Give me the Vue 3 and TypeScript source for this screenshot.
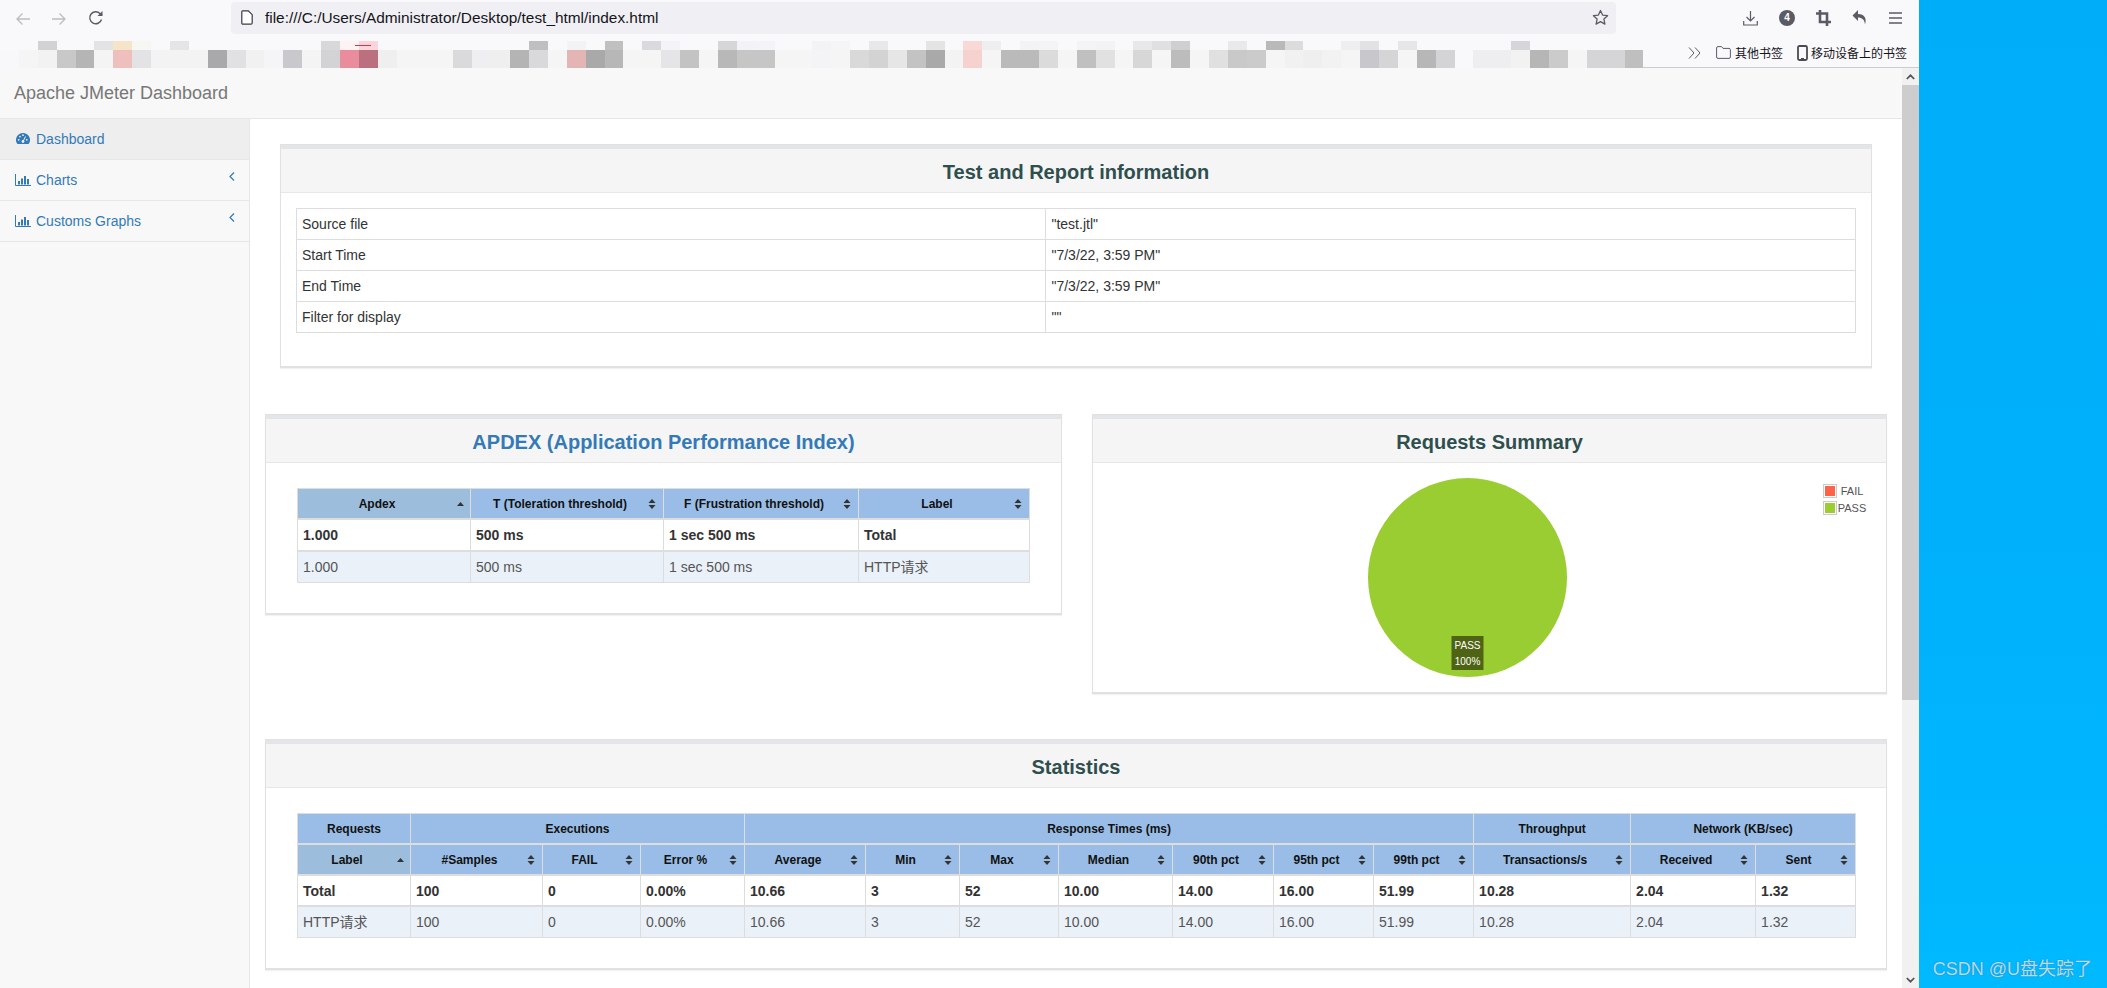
<script setup lang="ts">
const lower = ['f8f8fa','f5f5f6','f2f2f3','c8c8c8','b5b5b5','f4f4f4','eebfbd','e3e3e5','f3f3f4','f3f3f4','f3f3f4','a9a9ac','e1e1e3','f1f1f2','f5f5f7','c9c9cd','f4f4f5','d3d3d5','e98d9c','ba707e','efeff0','f5f5f5','f5f5f5','f5f5f5','dadadc','efeff1','efeff0','b4b4b4','d9d9db','f5f5f5','e4b5b5','a9a9a9','b7b7b7','f5f5f6','f5f5f6','e5e5e7','c3c3c3','f5f5f6','b8b8b8','c6c6c6','c6c6c6','f5f5f5','f5f5f5','f4f4f6','f5f5f5','d9d9da','d3d3d4','e6e6e7','c3c3c4','a9a9a9','f3f3f4','f5d2cf','f5f5f5','bababb','bababb','dbdbdc','f5f5f5','c0c0c1','e1e1e2','f5f5f5','d7d7d8','f5f5f5','bcbcbd','f5f5f5','e0e0e1','c9c9ca','cbcbcb','f5f5f5','f1f1f2','efeff0','f2f2f3','f5f5f6','c8c8cc','d5d5d7','f5f5f5','b7b7b7','d4d4d6','f9f9fb','eeeef0','eeeef0','f2f2f3','b6b6b6','cbcbcc','f5f5f5','d5d5d7','d5d5d7','bfbfbf']
const upperMap: Record<number, string> = { 2:'d2d2d4',5:'e3e3e5',6:'f6e4c8',7:'f6f6f3',9:'e5e5e7',17:'d8d8da',18:'fdf2f4',19:'fbd5dc',28:'bfbfc1',30:'f3f3f6',32:'c0c0c0',34:'dadade',35:'f3f3f8',38:'d6d6d8',39:'f3f3f7',40:'f4f4f8',43:'f3f3f6',44:'f5f5f8',46:'e8e8ea',49:'e4e4e5',51:'f8d9d5',52:'eeeef1',54:'f3f3f6',55:'f4f4f7',57:'f4f4f7',58:'f3f3f6',60:'e8e8ea',61:'e0e0e2',62:'cfcfd1',65:'e9e9eb',67:'b9b9ba',68:'dcdcde',71:'eeeef0',72:'e2e2e4',74:'e6e6e8',80:'d5d5da' }
const mosaic = [
  ...lower.map((_, i) => '#' + (upperMap[i] ?? 'f9f9fb')),
  ...lower.map((c) => '#' + c),
]

const infoCols = [749, 809]
const infoRows = [
  ['Source file', '"test.jtl"'],
  ['Start Time', '"7/3/22, 3:59 PM"'],
  ['End Time', '"7/3/22, 3:59 PM"'],
  ['Filter for display', '""'],
]

const apdexCols = [173, 193, 195, 171]
const apdexHead = ['Apdex', 'T (Toleration threshold)', 'F (Frustration threshold)', 'Label']
const apdexRows = [
  ['1.000', '500 ms', '1 sec 500 ms', 'Total'],
  ['1.000', '500 ms', '1 sec 500 ms', 'HTTP请求'],
]

const statCols = [113, 132, 98, 104, 121, 94, 99, 114, 101, 100, 100, 157, 125, 100]
const statGroups = [
  { t: 'Requests', s: 1 },
  { t: 'Executions', s: 3 },
  { t: 'Response Times (ms)', s: 7 },
  { t: 'Throughput', s: 1 },
  { t: 'Network (KB/sec)', s: 2 },
]
const statHead = ['Label', '#Samples', 'FAIL', 'Error %', 'Average', 'Min', 'Max', 'Median', '90th pct', '95th pct', '99th pct', 'Transactions/s', 'Received', 'Sent']
const statRows = [
  ['Total', '100', '0', '0.00%', '10.66', '3', '52', '10.00', '14.00', '16.00', '51.99', '10.28', '2.04', '1.32'],
  ['HTTP请求', '100', '0', '0.00%', '10.66', '3', '52', '10.00', '14.00', '16.00', '51.99', '10.28', '2.04', '1.32'],
]
</script>

<template>
  <div class="screen">
    <div class="window">
      <div class="toolbar">
        <svg class="tb-ico back" width="16" height="14" viewBox="0 0 16 14"><path d="M15 7H2M7.5 1.5 2 7l5.5 5.5" fill="none" stroke="#bdbdc1" stroke-width="1.3"/></svg>
        <svg class="tb-ico fwd" width="16" height="14" viewBox="0 0 16 14"><path d="M1 7h13M8.500 1.500 14 7l-5.500 5.500" fill="none" stroke="#bdbdc1" stroke-width="1.300"/></svg>
        <svg class="tb-ico reload" width="16" height="16" viewBox="0 0 16 16"><path d="M13.500 9.500A6 6 0 1 1 12 3.500L14 5.500" fill="none" stroke="#5b5b66" stroke-width="1.400"/><path d="M14.500 1v5h-5z" fill="#5b5b66"/></svg>
        <div class="urlbar">
          <svg width="12" height="15" viewBox="0 0 12 15"><path d="M1.500.8h5.800l3.900 3.900v8.300a1.200 1.200 0 0 1-1.200 1.200H1.500A1.200 1.200 0 0 1 .8 13V2A1.200 1.200 0 0 1 1.500.8z" fill="#fff" stroke="#3a3a44" stroke-width="1.200"/></svg>
          <span class="url">file:///C:/Users/Administrator/Desktop/test_html/index.html</span>
          <svg class="star" width="17" height="17" viewBox="0 0 17 17"><path d="M8.500 1.500l2.100 4.600 5 .6-3.700 3.400 1 5-4.400-2.500-4.400 2.500 1-5L1.400 6.700l5-.6z" fill="none" stroke="#5b5b66" stroke-width="1.300" stroke-linejoin="round"/></svg>
        </div>
        <div class="tb-right">
          <svg width="15" height="16" viewBox="0 0 15 16"><path d="M7.500 1v10M3.500 7l4 4 4-4M.7 11v4h13.600v-4" fill="none" stroke="#5b5b66" stroke-width="1.200"/></svg>
          <span class="badge">4</span>
          <svg width="15" height="16" viewBox="0 0 15 16"><path d="M4 0v12h11M0 3.500h11v12.500" fill="none" stroke="#5b5b66" stroke-width="2.600"/></svg>
          <svg width="15" height="16" viewBox="0 0 15 16"><path d="M6 0 .5 5.500 6 11V7.500c4 0 6.500 2 7 7 2-6-.5-10.500-7-10.500z" fill="#5b5b66"/></svg>
          <svg class="burger" width="13" height="12" viewBox="0 0 13 12"><path d="M0 1h13M0 6h13M0 11h13" stroke="#5b5b66" stroke-width="1.300"/></svg>
        </div>
      </div>

      <div class="bookmarks">
        <div class="mosaic">
          <i v-for="(c, i) in mosaic" :key="i" :style="{ background: c }"></i>
          <b class="redline"></b>
        </div>
        <svg class="more" width="13" height="12" viewBox="0 0 13 12"><path d="M1 .5 6 6l-5 5.500M7 .5 12 6l-5 5.500" fill="none" stroke="#5b5b66" stroke-width="1"/></svg>
        <svg class="folder" width="15" height="13" viewBox="0 0 15 13"><path d="M.6 2A1.400 1.400 0 0 1 2 .6h3.500l1.500 1.800h6a1.400 1.400 0 0 1 1.400 1.400V11A1.400 1.400 0 0 1 13 12.400H2A1.400 1.400 0 0 1 .6 11z" fill="none" stroke="#5b5b66" stroke-width="1"/></svg>
        <span class="bm-text">其他书签</span>
        <svg class="phone" width="11" height="16" viewBox="0 0 11 16"><rect x="1" y="1" width="9" height="14" rx="1.500" fill="none" stroke="#4a4a52" stroke-width="1.800"/><rect x="4" y="13" width="3" height="1.500" fill="#4a4a52"/></svg>
        <span class="bm-text">移动设备上的书签</span>
      </div>

      <div class="page">
        <div class="doc">
          <div class="navbar">Apache JMeter Dashboard</div>
          <div class="layout">
            <aside class="sidebar">
              <a class="nav-item active">
                <svg class="nav-ico" width="16" height="12" viewBox="0 0 14 12"><path d="M7 0a7 7 0 0 1 6 10.600.8.8 0 0 1-.7.4H1.700a.8.8 0 0 1-.7-.4A7 7 0 0 1 7 0z" fill="#337ab7"/><g fill="#eee"><circle cx="2.700" cy="6.800" r=".9"/><circle cx="4" cy="3.600" r=".9"/><circle cx="7" cy="2.200" r=".9"/><circle cx="10.800" cy="6.800" r=".9"/><circle cx="7" cy="8.500" r="1.400"/></g><path d="M7 8.500 9.500 3.500" stroke="#eee" stroke-width="1"/></svg>
                Dashboard
              </a>
              <a class="nav-item">
                <svg class="nav-ico" width="16" height="12" viewBox="0 0 16 12"><path d="M.5 0v11.500H16" fill="none" stroke="#337ab7"/><path d="M3 7h2v3.500H3zM6 4.500h2v6H6zM9 2h2v8.500H9zM12 5h2v5.500h-2z" fill="#337ab7"/></svg>
                Charts
                <svg class="angle" width="6" height="9" viewBox="0 0 6 9"><path d="M5 .5 1 4.500l4 4" fill="none" stroke="#337ab7" stroke-width="1.200"/></svg>
              </a>
              <a class="nav-item">
                <svg class="nav-ico" width="16" height="12" viewBox="0 0 16 12"><path d="M.5 0v11.500H16" fill="none" stroke="#337ab7"/><path d="M3 7h2v3.500H3zM6 4.500h2v6H6zM9 2h2v8.500H9zM12 5h2v5.500h-2z" fill="#337ab7"/></svg>
                Customs Graphs
                <svg class="angle" width="6" height="9" viewBox="0 0 6 9"><path d="M5 .5 1 4.500l4 4" fill="none" stroke="#337ab7" stroke-width="1.200"/></svg>
              </a>
            </aside>

            <main class="main">
              <section class="panel first">
                <h3 class="panel-head">Test and Report information</h3>
                <div class="panel-body info-body">
                  <table class="grid info">
                    <colgroup><col v-for="w in infoCols" :key="w" :style="{ width: w + 'px' }" /></colgroup>
                    <tbody>
                      <tr v-for="r in infoRows" :key="r[0]">
                        <td v-for="c in r" :key="c">{{ c }}</td>
                      </tr>
                    </tbody>
                  </table>
                </div>
              </section>

              <div class="row">
                <section class="panel">
                  <h3 class="panel-head link">APDEX (Application Performance Index)</h3>
                  <div class="panel-body">
                    <table class="grid data">
                      <colgroup><col v-for="(w, i) in apdexCols" :key="i" :style="{ width: w + 'px' }" /></colgroup>
                      <thead>
                        <tr class="sortrow">
                          <th v-for="(h, i) in apdexHead" :key="h" :class="{ sorted: i === 0 }">
                            {{ h }}
                            <svg v-if="i === 0" class="sort asc" width="7" height="4" viewBox="0 0 7 4"><path d="M3.500 0 7 4H0z" fill="#333"/></svg>
                            <svg v-else class="sort" width="8" height="10" viewBox="0 0 8 10"><path d="M4 0l3.500 4h-7zM4 10l3.500-4h-7z" fill="#333"/></svg>
                          </th>
                        </tr>
                      </thead>
                      <tbody>
                        <tr v-for="(r, ri) in apdexRows" :key="ri" :class="ri === 0 ? 'total' : 'item'">
                          <td v-for="(c, ci) in r" :key="ci">{{ c }}</td>
                        </tr>
                      </tbody>
                    </table>
                  </div>
                </section>

                <section class="panel">
                  <h3 class="panel-head">Requests Summary</h3>
                  <svg class="pie" width="793" height="229" viewBox="0 0 793 229">
                    <circle cx="374.500" cy="114.500" r="99.500" fill="#9acd32"/>
                    <rect x="358.500" y="173" width="32" height="34" fill="#4e6414"/>
                    <text x="374.500" y="186" class="pie-label">PASS</text>
                    <text x="374.500" y="202" class="pie-label">100%</text>
                    <rect x="730.500" y="21.500" width="13" height="13" fill="#fff" stroke="#ccc"/>
                    <rect x="732" y="23" width="10" height="10" fill="#ff6347"/>
                    <rect x="730.500" y="38.500" width="13" height="13" fill="#fff" stroke="#ccc"/>
                    <rect x="732" y="40" width="10" height="10" fill="#9acd32"/>
                    <text x="759" y="32" class="legend">FAIL</text>
                    <text x="759" y="49" class="legend">PASS</text>
                  </svg>
                </section>
              </div>

              <section class="panel last">
                <h3 class="panel-head">Statistics</h3>
                <div class="panel-body">
                  <table class="grid data stats">
                    <colgroup><col v-for="(w, i) in statCols" :key="i" :style="{ width: w + 'px' }" /></colgroup>
                    <thead>
                      <tr>
                        <th v-for="g in statGroups" :key="g.t" :colspan="g.s">{{ g.t }}</th>
                      </tr>
                      <tr class="sortrow">
                        <th v-for="(h, i) in statHead" :key="h" :class="{ sorted: i === 0 }">
                          {{ h }}
                          <svg v-if="i === 0" class="sort asc" width="7" height="4" viewBox="0 0 7 4"><path d="M3.500 0 7 4H0z" fill="#333"/></svg>
                          <svg v-else class="sort" width="8" height="10" viewBox="0 0 8 10"><path d="M4 0l3.500 4h-7zM4 10l3.500-4h-7z" fill="#333"/></svg>
                        </th>
                      </tr>
                    </thead>
                    <tbody>
                      <tr v-for="(r, ri) in statRows" :key="ri" :class="ri === 0 ? 'total' : 'item'">
                        <td v-for="(c, ci) in r" :key="ci">{{ c }}</td>
                      </tr>
                    </tbody>
                  </table>
                </div>
              </section>
            </main>
          </div>
        </div>

        <div class="scrollbar">
          <div class="sb-btn"><svg width="9" height="6" viewBox="0 0 9 6"><path d="M.8 5 4.500 1.300 8.200 5" fill="none" stroke="#505050" stroke-width="1.700"/></svg></div>
          <div class="sb-thumb"></div>
          <div class="sb-track"></div>
          <div class="sb-btn"><svg width="9" height="6" viewBox="0 0 9 6"><path d="M.8 1 4.500 4.700 8.200 1" fill="none" stroke="#505050" stroke-width="1.700"/></svg></div>
        </div>
      </div>
    </div>

    <div class="desktop">
      <span class="watermark">CSDN @U盘失踪了</span>
    </div>
  </div>
</template>

<style scoped>
.screen {
  display: flex;
  width: 2107px;
  height: 988px;
  overflow: hidden;
  background: #fff;
  font-family: "Liberation Sans", "Noto Sans CJK SC", sans-serif;
  font-size: 14px;
  line-height: 20px;
  color: #333;
}
.window {
  width: 1919px;
  display: flex;
  flex-direction: column;
  flex: none;
}
.toolbar {
  height: 35px;
  background: #f9f9fb;
  position: relative;
  display: flex;
  align-items: center;
  padding-top: 3px;
  box-sizing: border-box;
  flex: none;
}
.tb-ico { flex: none; }
.back { margin-left: 15px; }
.fwd { margin-left: 20px; }
.reload { margin-left: 21px; margin-top: -3px; }
.urlbar {
  margin-left: 127px;
  width: 1385px;
  height: 32px;
  background: #f0f0f4;
  border-radius: 4px;
  display: flex;
  align-items: center;
  padding: 0 7px 0 10px;
  box-sizing: border-box;
  flex: none;
  margin-top: -3px;
  margin-bottom: 0;
}
.url {
  margin-left: 12px;
  font-size: 15.4px;
  color: #15141a;
  flex: 1;
  white-space: nowrap;
}
.tb-right {
  display: flex;
  align-items: center;
  margin-left: 127px;
  gap: 21px;
  margin-top: -3px;
}
.burger { margin-left: 1px; }
.badge {
  width: 16px;
  height: 16px;
  border-radius: 50%;
  background: #5b5b66;
  color: #fff;
  font-size: 10px;
  font-weight: 700;
  line-height: 16px;
  text-align: center;
}
.bookmarks {
  height: 33px;
  background: #f9f9fb;
  border-bottom: 1px solid #ccc;
  box-sizing: border-box;
  display: flex;
  align-items: center;
  padding-top: 3px;
  flex: none;
  position: relative;
}
.mosaic {
  display: grid;
  grid-template-columns: repeat(87, 18.9px);
  grid-template-rows: 9px 18px;
  width: 1645px;
  align-self: flex-start;
  margin-top: 3px;
  position: relative;
  height: 28px;
  flex: none;
}
.mosaic i { display: block; }
.redline {
  position: absolute;
  left: 355px;
  top: 4px;
  width: 16px;
  height: 1px;
  background: #e0304a;
}
.more { margin-left: 43px; flex: none; }
.folder { margin-left: 15px; flex: none; }
.bm-text {
  font-family: "Noto Sans CJK SC", sans-serif;
  font-size: 12px;
  color: #15141a;
  margin-left: 4px;
  white-space: nowrap;
}
.phone { margin-left: 14px; flex: none; }
.phone + .bm-text { margin-left: 3px; }

.page {
  flex: 1;
  display: flex;
  min-height: 0;
}
.doc {
  flex: 1;
  min-width: 0;
  display: flex;
  flex-direction: column;
}
.navbar {
  height: 51px;
  box-sizing: border-box;
  background: #f8f8f8;
  border-bottom: 1px solid #e7e7e7;
  padding: 15px 14px;
  font-size: 18px;
  color: #777;
  flex: none;
}
.layout {
  flex: 1;
  display: flex;
  min-height: 0;
}
.sidebar {
  width: 250px;
  box-sizing: border-box;
  background: #f8f8f8;
  border-right: 1px solid #e7e7e7;
  flex: none;
}
.nav-item {
  display: flex;
  align-items: center;
  height: 41px;
  box-sizing: border-box;
  border-bottom: 1px solid #e7e7e7;
  padding: 0 15px;
  color: #337ab7;
  position: relative;
}
.nav-item.active { background: #eee; }
.nav-ico { margin-right: 5px; flex: none; }
.angle {
  position: absolute;
  left: 229px;
  top: 12px;
}
.main {
  flex: 1;
  min-width: 0;
  padding: 25px 30px 0;
  box-sizing: border-box;
  overflow: hidden;
}
.panel {
  background: #fff;
  border: 1px solid #e1e1e1;
  box-shadow: 0 1px 1px rgba(0, 0, 0, 0.05);
  box-sizing: border-box;
  border-bottom-width: 2px;
}
.panel.first { margin-bottom: 46px; }
.row {
  display: grid;
  grid-template-columns: 1fr 1fr;
  gap: 30px;
  margin: 0 -15px 45px;
  align-items: start;
}
.panel.last { margin: 0 -15px; }
.panel-head {
  margin: 0;
  height: 48px;
  box-sizing: border-box;
  background: #f5f5f5;
  border-top: 4px solid #e3e5e8;
  border-bottom: 1px solid #e7e7e7;
  padding-top: 4px;
  font-size: 20px;
  font-weight: 700;
  line-height: 39px;
  text-align: center;
  color: #2f4f4f;
}
.panel-head.link { color: #337ab7; }
.panel-body { padding: 25px 31px 30px; }
.info-body { padding: 15px 15px 33px; }
.pie { display: block; }
.pie-label {
  font-size: 10px;
  fill: #fff;
  text-anchor: middle;
}
.legend {
  font-size: 11px;
  fill: #545454;
  text-anchor: middle;
}
.grid {
  width: 100%;
  table-layout: fixed;
  border-collapse: collapse;
}
.grid td,
.grid th {
  border: 1px solid #ddd;
  padding: 5px;
  white-space: nowrap;
  overflow: hidden;
}
.data th {
  background: #99bde6;
  color: #111;
  font-size: 12px;
  font-weight: 700;
  text-align: center;
  border-bottom-width: 2px;
  position: relative;
  padding-bottom: 4px;
}
.data .sortrow th { padding-right: 19px; }
.data th.sorted { background: #9dbddc; }
.sort {
  position: absolute;
  right: 7px;
  top: 50%;
  transform: translateY(-50%);
}
.sort.asc { right: 6px; }
.data .total td {
  font-weight: 700;
  border-bottom-width: 2px;
}
.stats .total td { padding-bottom: 4px; }
.data .item td {
  background: #eaf1f9;
  color: #555;
}
.scrollbar {
  width: 17px;
  flex: none;
  display: flex;
  flex-direction: column;
  background: #f1f1f1;
}
.sb-btn {
  height: 17px;
  display: flex;
  align-items: center;
  justify-content: center;
  flex: none;
}
.sb-thumb {
  height: 615px;
  background: #cdcdcd;
  flex: none;
}
.sb-track { flex: 1; }
.desktop {
  flex: 1;
  background: linear-gradient(180deg, #00adf9 0%, #00b0fb 55%, #00b9ff 100%);
  display: flex;
  align-items: flex-end;
  justify-content: flex-end;
  padding: 0 15px 8px 0;
}
.watermark {
  font-size: 18px;
  line-height: 22px;
  color: rgba(255, 255, 255, 0.72);
  text-shadow: 0 0 1px rgba(40, 60, 80, 0.6);
  white-space: nowrap;
}
</style>

<style>
html, body { margin: 0; overflow: hidden; }
</style>
